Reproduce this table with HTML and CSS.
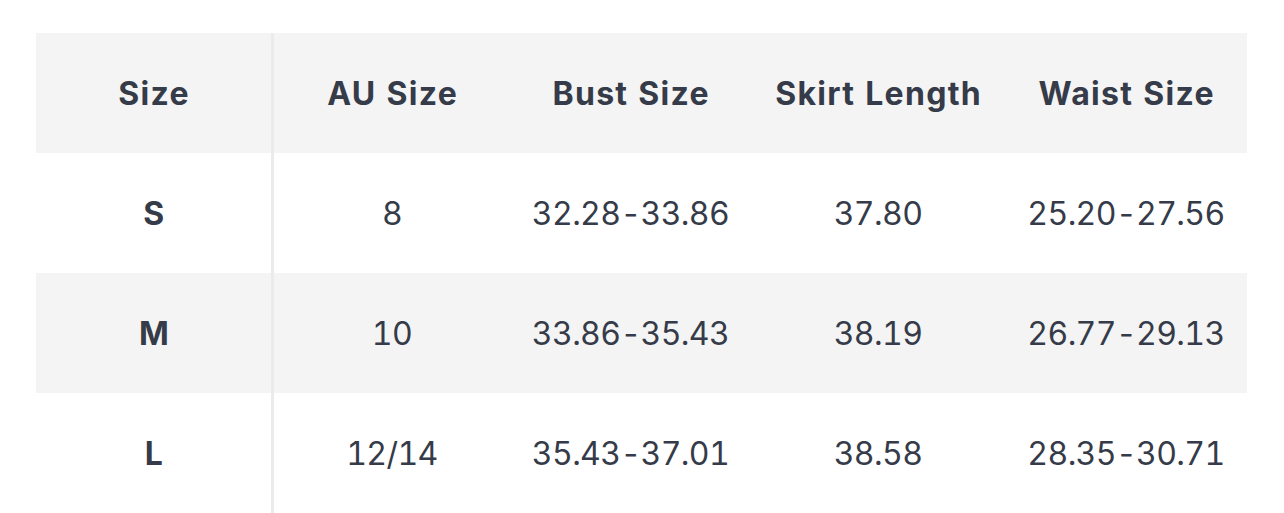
FILE: index.html
```html
<!DOCTYPE html>
<html>
<head>
<meta charset="utf-8">
<link rel="stylesheet" href="styles.css">
</head>
<body>
<div class="table">
  <div class="row head">
    <div class="cell first">Size</div>
    <div class="cell">AU Size</div>
    <div class="cell">Bust Size</div>
    <div class="cell">Skirt Length</div>
    <div class="cell">Waist Size</div>
  </div>
  <div class="row">
    <div class="cell first">S</div>
    <div class="cell">8</div>
    <div class="cell">32.28-33.86</div>
    <div class="cell">37.80</div>
    <div class="cell">25.20-27.56</div>
  </div>
  <div class="row alt">
    <div class="cell first">M</div>
    <div class="cell">10</div>
    <div class="cell">33.86-35.43</div>
    <div class="cell">38.19</div>
    <div class="cell">26.77-29.13</div>
  </div>
  <div class="row">
    <div class="cell first">L</div>
    <div class="cell">12/14</div>
    <div class="cell">35.43-37.01</div>
    <div class="cell">38.58</div>
    <div class="cell">28.35-30.71</div>
  </div>
</div>
</body>
</html>
```
FILE: styles.css
```css
html, body {
  margin: 0;
  background: #ffffff;
}
body {
  padding: 33px 36px 0 36px;
  font-family: Inter, Lato, sans-serif;
  color: #353b48;
}
.table {
  width: 1211px;
}
.row {
  display: grid;
  grid-template-columns: 238px 236px 241px 254px 1fr;
  height: 120px;
}
.head, .alt {
  background: #f4f4f4;
}
.cell {
  display: flex;
  align-items: center;
  justify-content: center;
  font-size: 32px;
  font-weight: 400;
  letter-spacing: -0.6px;
  font-variant-numeric: tabular-nums;
}
.head .cell {
  font-weight: 700;
  letter-spacing: 1.3px;
  padding-left: 1.3px;
}
.cell.first {
  font-weight: 700;
  border-right: 3px solid #ebebeb;
}
```
